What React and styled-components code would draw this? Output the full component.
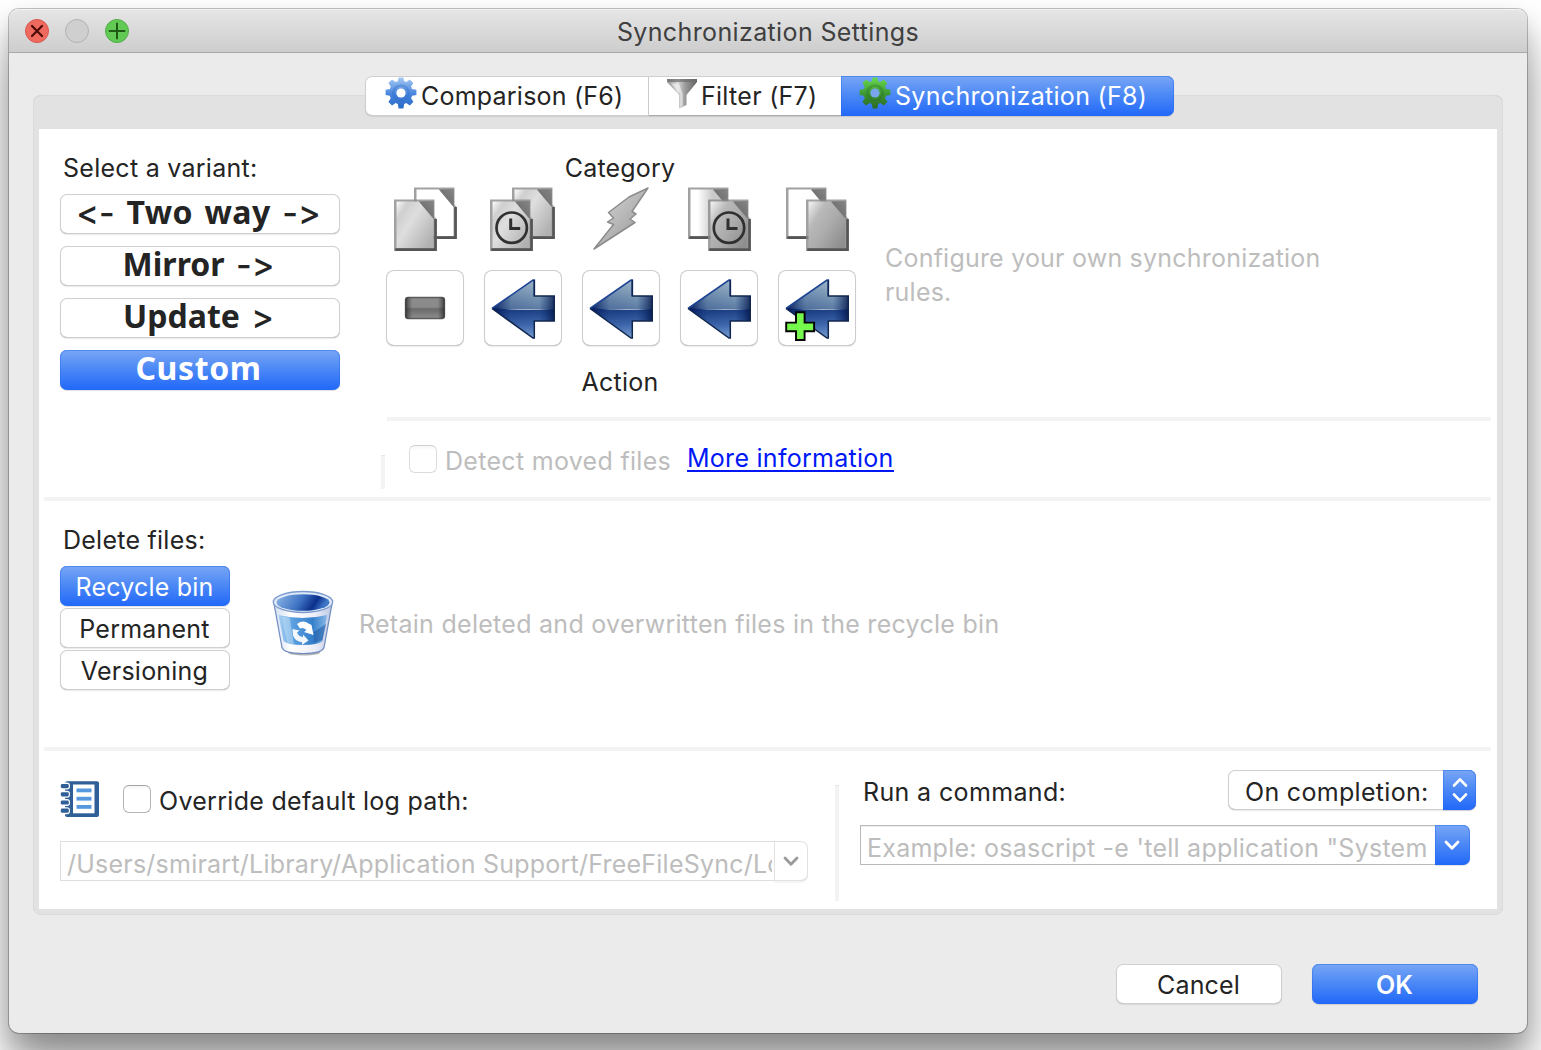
import React from "react";
import styled, { createGlobalStyle, css } from "styled-components";

const GlobalStyle = createGlobalStyle`
  * { box-sizing: border-box; }
  html, body { margin: 0; padding: 0; }
  body {
    background: #ffffff;
    color: #242424;
    font-family: Inter, "Liberation Sans", sans-serif;
    font-size: 25px;
    line-height: 34px;
    overflow: hidden;
  }
  button { font: inherit; color: inherit; margin: 0; }
`;

const blueGradient = css`
  background: linear-gradient(#79a6f5, #4e8af5 45%, #2168f9);
  box-shadow: inset 0 1px 0 #4d89ee, inset 1px 0 0 rgba(40, 105, 240, 0.45),
    inset -1px 0 0 rgba(40, 105, 240, 0.45), 0 1px 1px rgba(0, 0, 0, 0.12);
  color: #ffffff;
`;

const whiteFace = css`
  background: #ffffff;
  box-shadow: inset 0 0 0 1px #cfcfcf, inset 0 -1px 0 #b4b4b4, 0 1px 1px rgba(0, 0, 0, 0.09);
`;

const Desktop = styled.div`
  width: 1541px;
  height: 1050px;
  padding: 9px 14px 17px 9px;
  overflow: hidden;
`;

const Window = styled.main`
  display: flex;
  flex-direction: column;
  width: 1518px;
  height: 1024px;
  border-radius: 10px;
  background: #ebebeb;
  box-shadow: 0 0 0 1px rgba(0, 0, 0, 0.24), 0 14px 26px rgba(0, 0, 0, 0.2),
    0 36px 50px rgba(0, 0, 0, 0.34);
`;

const TitleBar = styled.header`
  display: grid;
  grid-template-columns: 200px 1fr 200px;
  align-items: center;
  height: 44px;
  border-radius: 10px 10px 0 0;
  border-bottom: 1px solid #a9a9a9;
  background: linear-gradient(#e6e6e6, #cdcdcd);
  box-shadow: inset 0 1px 0 #f4f4f4;
`;

const TrafficLights = styled.div`
  display: flex;
  gap: 16px;
  padding-left: 16px;
`;

const Light = styled.span`
  width: 24px;
  height: 24px;
  border-radius: 50%;
  border: 1px solid ${(p) => p.$edge};
  background: ${(p) => p.$fill};
  svg { display: block; }
`;

const Title = styled.h1`
  margin: 2px 0 0;
  font-size: 25px;
  font-weight: 400;
  line-height: 34px;
  letter-spacing: 0.37px;
  text-align: center;
  color: #404040;
`;

const TabBox = styled.section`
  width: 1470px;
  height: 820px;
  margin: 42px 0 0 24px;
  padding: 0 6px;
  border-radius: 8px;
  background: #e2e2e2;
  box-shadow: inset 0 0 0 1px #dbdbdb, inset 0 1px 0 #cfcfcf;
`;

const TabBar = styled.nav`
  display: flex;
  width: 809px;
  height: 40px;
  margin: -19px 0 13px 326px;
`;

const Tab = styled.button`
  display: flex;
  align-items: flex-start;
  gap: ${(p) => p.$gap || 4}px;
  width: ${(p) => p.$width}px;
  height: 40px;
  padding: 0 0 0 ${(p) => p.$inset}px;
  border: 0;
  background: #ffffff;
  box-shadow: inset 0 1px 0 #cfcfcf, inset 0 -1px 0 #ababab, 0 1px 1px rgba(0, 0, 0, 0.1);
  &:first-child { ${whiteFace} }
  ${(p) => p.$active && blueGradient}
  &:first-child { border-radius: 7px 0 0 7px; }
  &:last-child { border-radius: 0 7px 7px 0; }
  svg { flex: none; margin-top: 1px; }
`;

const Text = styled.span`
  display: block;
  line-height: ${(p) => p.$line || 34}px;
  letter-spacing: ${(p) => p.$track || 0}px;
  white-space: nowrap;
  color: ${(p) => (p.$muted ? "#bdbdbd" : "inherit")};
`;

const TabText = styled(Text)`
  line-height: 40px;
`;

const Panel = styled.div`
  width: 1458px;
  height: 780px;
  background: #ffffff;
`;

const Rule = styled.hr`
  height: 4px;
  margin: 0 6px 0 ${(p) => p.$indent}px;
  border: 0;
  background: #f3f3f3;
`;

const VerticalRule = styled.div`
  flex: none;
  width: 4px;
  height: ${(p) => p.$height}px;
  margin-top: 34px;
  background: #f3f3f3;
  border-top: 1px solid #e6e6e6;
`;

const DirectionSection = styled.section`
  display: flex;
  height: 368px;
`;

const ChoiceColumn = styled.div`
  display: flex;
  flex-direction: column;
  flex: none;
  width: ${(p) => p.$width}px;
  margin-left: 21px;
  padding-top: 22px;
`;

const ChoiceLabel = styled(Text)`
  margin: 0 0 9px 3px;
`;

const ChoiceList = styled.div`
  display: flex;
  flex-direction: column;
  gap: ${(p) => p.$gap}px;
`;

const PushButton = styled.button`
  width: ${(p) => p.$width || "100%"};
  height: 40px;
  padding: 0 1px 0 0;
  border: 0;
  border-radius: 7px;
  line-height: 42px;
  letter-spacing: ${(p) => p.$track || 0}px;
  font-weight: ${(p) => (p.$strong ? 600 : 400)};
  white-space: nowrap;
  ${whiteFace}
  ${(p) => p.$active && blueGradient}
`;

const VariantButton = styled(PushButton)`
  padding: 0 3px 5px 0;
  font-family: "Noto Sans", "Open Sans", sans-serif;
  font-size: 32px;
  font-weight: 700;
  line-height: 35px;
  word-spacing: 3px;
`;

const Operator = styled.span`
  position: relative;
  top: 1px;
  font-family: Inter, sans-serif;
  font-size: 34px;
  font-weight: 500;
  font-feature-settings: "calt" 0;
  line-height: 0;
  letter-spacing: 0;
`;

const RulesColumn = styled.div`
  width: 1116px;
  margin-left: 41px;
`;

const RulesTop = styled.div`
  display: flex;
  height: 288px;
  padding: 22px 0 0 5px;
`;

const RuleTable = styled.div`
  display: flex;
  flex-direction: column;
  align-items: center;
  width: 470px;
`;

const RuleCaption = styled(Text)`
  margin-right: 2px;
`;

const CategoryRow = styled.div`
  display: flex;
  gap: 34px;
  margin: 2px 0 19px;
  svg { overflow: visible; filter: blur(0.4px); }
`;

const ActionRow = styled.div`
  display: flex;
  gap: 20px;
  margin-bottom: 19px;
`;

const ActionButton = styled.button`
  display: flex;
  align-items: center;
  justify-content: center;
  width: 78px;
  height: 76px;
  padding: 2px 0 0;
  border: 0;
  border-radius: 8px;
  background: #ffffff;
  box-shadow: inset 0 0 0 1px #cccccc, inset 0 -1px 0 #bcbcbc, 0 1px 1px rgba(0, 0, 0, 0.08);
`;

const Description = styled.div`
  margin: 90px 0 0 29px;
`;

const DetectRow = styled.div`
  display: flex;
`;

const Checkbox = styled.span`
  flex: none;
  width: 28px;
  height: 28px;
  border: 1px solid ${(p) => (p.$muted ? "#dcdcdc" : "#b5b5b5")};
  border-top-color: ${(p) => (p.$muted ? "#cecece" : "#a3a3a3")};
  border-radius: 6px;
  background: linear-gradient(#f5f5f5, #ffffff 4px);
`;

const DetectCheckbox = styled(Checkbox)`
  margin: 24px 8px 0 24px;
`;

const DetectText = styled(Text)`
  width: 242px;
  margin-top: 23px;
`;

const InfoLink = styled.a`
  height: 31px;
  margin-top: 20px;
  line-height: 34px;
  letter-spacing: 0.27px;
  border-bottom: 2px solid #0018f5;
  color: #0018f5;
  white-space: nowrap;
`;

const DeleteSection = styled.section`
  display: flex;
  height: 246px;
`;

const DeleteHint = styled.div`
  display: flex;
  align-items: center;
  gap: 24px;
  height: 66px;
  margin: 89px 0 0 41px;
`;

const HintText = styled(Text)`
  padding-top: 2px;
`;

const BottomSection = styled.section`
  display: flex;
  height: 158px;
`;

const LogColumn = styled.div`
  width: 796px;
  padding: 28px 0 0 21px;
`;

const LogRow = styled.div`
  display: flex;
  align-items: center;
  height: 40px;
  margin-bottom: 22px;
`;

const LogCheckbox = styled(Checkbox)`
  margin: 0 8px 0 23px;
`;

const LogText = styled(Text)`
  padding-top: 4px;
`;

const CommandColumn = styled.div`
  padding: 19px 0 0 21px;
`;

const CommandRow = styled.div`
  display: flex;
  align-items: center;
  justify-content: space-between;
  width: 616px;
  height: 40px;
  margin-bottom: 15px;
  padding-left: 3px;
`;

const CommandText = styled(Text)`
  padding-top: 4px;
`;

const Popup = styled.button`
  display: flex;
  justify-content: space-between;
  width: 248px;
  height: 40px;
  padding: 0 0 0 17px;
  border: 0;
  border-radius: 7px;
  ${whiteFace}
`;

const PopupArrows = styled.span`
  display: flex;
  align-items: center;
  justify-content: center;
  width: 33px;
  height: 40px;
  border-radius: 0 7px 7px 0;
  ${blueGradient}
`;

const Combo = styled.div`
  display: flex;
  height: 40px;
`;

const ComboField = styled.div`
  width: ${(p) => p.$width}px;
  height: 40px;
  padding: 2px 0 0 6px;
  border: 1px solid ${(p) => (p.$muted ? "#dedede" : "#bababa")};
  border-right: 0;
  box-shadow: ${(p) => (p.$muted ? "none" : "inset 0 1px 0 #f0f0f0")};
`;

const ComboClip = styled.div`
  width: ${(p) => p.$width}px;
  overflow: hidden;
`;

const ComboArrow = styled.button`
  display: flex;
  align-items: center;
  justify-content: center;
  width: ${(p) => p.$width}px;
  height: 40px;
  padding: 0 1px 0 0;
  border: 0;
  border-radius: 0 7px 7px 0;
  background: #ffffff;
  box-shadow: inset 0 0 0 1px #e2e2e2, inset 0 -1px 0 #d4d4d4, 0 2px 1px rgba(0, 0, 0, 0.04);
  ${(p) => p.$active && blueGradient}
`;

const Footer = styled.footer`
  display: flex;
  justify-content: flex-end;
  gap: 30px;
  padding: 49px 49px 0 0;
`;

function GearIcon({ id, light, dark, outline, hole }) {
  return (
    <svg width="32" height="32" viewBox="0 0 32 32">
      <defs>
        <linearGradient id={id} x1="0" y1="0" x2="0" y2="1">
          <stop offset="0" stopColor={light} />
          <stop offset="0.55" stopColor={dark} />
          <stop offset="1" stopColor={outline} />
        </linearGradient>
      </defs>
      <path
        d="M12.8 4.2 13.6.6h4.8l.8 3.6 2.1.8 3.4-2.4 3.6 3.500-2.200 3.500.9 2.300 4.400.9v5.100l-4.300.8-1 2.500 2.300 3.500-3.500 3.700-3.700-2.300-2 .9-.8 4.400h-4.800l-.8-4.400-2.200-.9-3.500 2.400-3.700-3.600 2.300-3.700-.9-2.400-4.200-.9v-5.100l4.300-.9.8-2.300-2.300-3.500 3.600-3.500 3.500 2.400z"
        fill={`url(#${id})`}
      />
      <circle cx="16" cy="16" r="7.6" fill="none" stroke={outline} strokeWidth="2.4" opacity="0.35" />
      <circle cx="16" cy="16" r="4.6" fill={hole} />
    </svg>
  );
}

function FunnelIcon() {
  return (
    <svg width="32" height="32" viewBox="0 0 32 32">
      <defs>
        <linearGradient id="funnel">
          <stop offset="0" stopColor="#8e8e8e" />
          <stop offset="0.35" stopColor="#d9d9d9" />
          <stop offset="0.6" stopColor="#9c9c9c" />
          <stop offset="1" stopColor="#606060" />
        </linearGradient>
      </defs>
      <path d="M1 2h30v3L20.5 18v10L13 31.5V18L1 5z" fill="url(#funnel)" />
      <path d="M1 2h30l-1 3H2z" fill="#6c6c6c" opacity="0.7" />
      <path d="M5 6.5 14.3 17v13l2.4-1.2V17L13 6.5z" fill="#fff" opacity="0.5" />
    </svg>
  );
}

function Page({ x, y, fill }) {
  return (
    <g transform={`translate(${x} ${y})`}>
      <path d="M0 .5h40.5v17l2.5 3V52H0z" fill="#8a8a8a" opacity="0.8" />
      <path d="M1.3 50.6h40.2V20" fill="none" stroke="#555555" strokeWidth="2.6" />
      <path d="M2.5 2.5H25l14.5 17.5v29h-37z" fill={fill} />
      <path d="M25 2.5 39.8 20V2z" fill="url(#fold)" />
    </g>
  );
}

function Clock({ x }) {
  return (
    <g fill="none" stroke="#303030">
      <circle cx={x} cy="40.7" r="15.2" strokeWidth="2.7" />
      <path d={`M${x - 1} 31.5v10h9.5`} strokeWidth="3" />
    </g>
  );
}

function PageDefs() {
  return (
    <defs>
      <linearGradient id="fold" x1="1" y1="0" x2="0" y2="1">
        <stop offset="0" stopColor="#858585" />
        <stop offset="0.5" stopColor="#747474" />
        <stop offset="1" stopColor="#b8b8b8" />
      </linearGradient>
      <linearGradient id="sheet" x1="0" y1="0" x2="1" y2="0.8">
        <stop offset="0" stopColor="#fbfbfb" />
        <stop offset="0.2" stopColor="#cfcfcf" />
        <stop offset="0.45" stopColor="#dedede" />
        <stop offset="1" stopColor="#b0b0b0" />
      </linearGradient>
      <linearGradient id="sheetDark" x1="0" y1="0" x2="1" y2="0.8">
        <stop offset="0" stopColor="#f4f4f4" />
        <stop offset="0.3" stopColor="#b9b9b9" />
        <stop offset="0.6" stopColor="#ababab" />
        <stop offset="1" stopColor="#8e8e8e" />
      </linearGradient>
      <linearGradient id="sheetFade">
        <stop offset="0.2" stopColor="#ffffff" />
        <stop offset="0.6" stopColor="#c9c9c9" />
      </linearGradient>
    </defs>
  );
}

function LeftOnlyIcon() {
  return (
    <svg width="64" height="64" viewBox="0 0 64 64">
      <PageDefs />
      <Page x={21} y={0} fill="#ffffff" />
      <Page x={1} y={12} fill="url(#sheet)" />
    </svg>
  );
}

function LeftNewerIcon() {
  return (
    <svg width="64" height="64" viewBox="0 0 64 64">
      <Page x={21} y={0} fill="url(#sheet)" />
      <Page x={-1} y={12} fill="url(#sheet)" />
      <Clock x={20.7} />
    </svg>
  );
}

function ConflictIcon() {
  return (
    <svg width="64" height="64" viewBox="0 0 64 64">
      <defs>
        <linearGradient id="bolt" x1="0" y1="0" x2="1" y2="1">
          <stop offset="0.3" stopColor="#c6c6c6" />
          <stop offset="0.7" stopColor="#a8a8a8" />
        </linearGradient>
      </defs>
      <path
        d="M59 1 43 24.5l4 2.5-6 5 5 3.5L5 62l19.500-24.500-6-2.500 6-4-5-5.500L40 10z"
        fill="url(#bolt)"
        stroke="#8c8c8c"
        strokeWidth="1.5"
        strokeLinejoin="round"
      />
    </svg>
  );
}

function RightNewerIcon() {
  return (
    <svg width="64" height="64" viewBox="0 0 64 64">
      <Page x={1} y={0} fill="url(#sheetFade)" />
      <Page x={21} y={12} fill="url(#sheetDark)" />
      <Clock x={42} />
    </svg>
  );
}

function RightOnlyIcon() {
  return (
    <svg width="64" height="64" viewBox="0 0 64 64">
      <Page x={1} y={0} fill="#ffffff" />
      <Page x={21} y={12} fill="url(#sheetDark)" />
    </svg>
  );
}

function MinusIcon() {
  return (
    <svg width="64" height="64" viewBox="0 0 64 64">
      <defs>
        <linearGradient id="minus" x1="0" y1="0" x2="0" y2="1">
          <stop offset="0" stopColor="#8b8b8b" />
          <stop offset="0.45" stopColor="#8a8a8a" />
          <stop offset="0.55" stopColor="#6a6a6a" />
          <stop offset="1" stopColor="#8e8e8e" />
        </linearGradient>
        <linearGradient id="minusEdge">
          <stop offset="0" stopColor="#222" stopOpacity="0.75" />
          <stop offset="0.18" stopColor="#444" stopOpacity="0" />
          <stop offset="0.82" stopColor="#444" stopOpacity="0" />
          <stop offset="1" stopColor="#222" stopOpacity="0.75" />
        </linearGradient>
      </defs>
      <rect x="12.5" y="20.5" width="39" height="21" rx="2.5" fill="url(#minus)" stroke="#5c5c5c" strokeWidth="1.3" />
      <rect x="12.5" y="20.5" width="39" height="21" rx="2.5" fill="url(#minusEdge)" />
    </svg>
  );
}

function ArrowLeftIcon({ id, plus }) {
  return (
    <svg width="64" height="64" viewBox="0 0 64 64">
      <defs>
        <linearGradient id={`${id}Top`} x1="0" y1="0" x2="0" y2="1">
          <stop offset="0" stopColor="#a9c0cf" />
          <stop offset="1" stopColor="#5a7ba3" />
        </linearGradient>
        <linearGradient id={`${id}Bottom`} x1="0" y1="0" x2="0" y2="1">
          <stop offset="0" stopColor="#183a7e" />
          <stop offset="0.5" stopColor="#4069ae" />
          <stop offset="1" stopColor="#86aede" />
        </linearGradient>
        <linearGradient id={`${id}Edge`}>
          <stop offset="0" stopColor="#001050" stopOpacity="0.95" />
          <stop offset="0.32" stopColor="#0a2a70" stopOpacity="0.15" />
          <stop offset="0.75" stopColor="#0a2a70" stopOpacity="0" />
          <stop offset="1" stopColor="#001040" stopOpacity="0.8" />
        </linearGradient>
        <clipPath id={`${id}Clip`}>
          <path d="M1 31.5 42 3h1.3V19H63.500v25H43.300V61H42z" />
        </clipPath>
      </defs>
      <g clipPath={`url(#${id}Clip)`}>
        <rect width="64" height="32.5" fill={`url(#${id}Top)`} />
        <path d="M0 31Q32 34.500 64 32V64H0z" fill={`url(#${id}Bottom)`} />
        <rect width="64" height="64" fill={`url(#${id}Edge)`} />
      </g>
      <path d="M1 31.5 42 3h1.3V19" fill="none" stroke="#1d4494" strokeWidth="1.6" />
      <path d="M43.3 3V19H63.300v25H43.300V61H42L1 31.500" fill="none" stroke="#10264f" strokeWidth="1.5" />
      {plus && (
        <path
          d="M11 35.3h8.600v10.300h9.500v8.600h-9.500V63H11v-8.800H1.200v-8.600H11z"
          fill="#75f94c"
          stroke="#000"
          strokeWidth="1.9"
        />
      )}
    </svg>
  );
}

function RecycleBinIcon() {
  return (
    <svg width="64" height="66" viewBox="0 0 64 66">
      <defs>
        <linearGradient id="binBody">
          <stop offset="0" stopColor="#a9d0f2" />
          <stop offset="0.3" stopColor="#5a9fe0" />
          <stop offset="0.7" stopColor="#357fcb" />
          <stop offset="1" stopColor="#86b7e6" />
        </linearGradient>
        <linearGradient id="binMouth" x1="0" y1="0" x2="1" y2="0.2">
          <stop offset="0" stopColor="#8fb7e6" />
          <stop offset="0.5" stopColor="#3f74c4" />
          <stop offset="0.8" stopColor="#0b2f8c" />
          <stop offset="1" stopColor="#3f78c8" />
        </linearGradient>
        <linearGradient id="binShell">
          <stop offset="0" stopColor="#cfdcf2" />
          <stop offset="0.3" stopColor="#ffffff" />
          <stop offset="0.7" stopColor="#eeeef8" />
          <stop offset="1" stopColor="#b9c6e2" />
        </linearGradient>
      </defs>
      <ellipse cx="33" cy="62.5" rx="16" ry="3" fill="#8e8e8e" opacity="0.7" />
      <path d="M2.5 11 11 57.500q2 6 21 6t21-6L61.500 11z" fill="url(#binShell)" stroke="#6f8cc0" strokeWidth="1.2" />
      <path d="M7.5 25q24 6 48.500 0L51.500 51q-4 4-19.500 4t-19.500-4z" fill="url(#binBody)" />
      <path d="M11 26.500 16 53l7 1.500-4.500-27z" fill="#c6e1f8" opacity="0.5" />
      <path d="m43 42 12-8-3.500 16-9 3z" fill="#15519e" opacity="0.5" />
      <ellipse cx="32" cy="12" rx="29.7" ry="10.5" fill="#dfeaf8" stroke="#7b9bce" strokeWidth="1.3" />
      <ellipse cx="32" cy="12.5" rx="26.5" ry="8.3" fill="url(#binMouth)" />
      <path d="M26 34q6-4.500 11.500-.5L40.500 35l2 10-9.500-3 2.500-2q-3.500-3-6.500-1.500z" fill="#fff" />
      <path d="M21.500 39l7 1.500-2.500 2q1.500 4 6 4.500v-2.500l5.500 6-6.500 4.500v-2.800q-7-.7-9-6.700z" fill="#fff" opacity="0.92" />
    </svg>
  );
}

function LogIcon() {
  return (
    <svg width="40" height="40" viewBox="0 0 40 40">
      <rect x="5" y="2.2" width="34" height="35.8" rx="2" fill="#2e5f97" />
      <rect x="13" y="5.5" width="21.5" height="28.8" fill="#fff" />
      <g fill="#5699df">
        <rect x="16.5" y="9.500" width="15" height="3.8" />
        <rect x="16.5" y="17.800" width="15" height="3.8" />
        <rect x="16.5" y="26" width="15" height="3.8" />
      </g>
      {[4.5, 12.7, 20.9, 29.1].map((y) => (
        <g key={y}>
          <rect x="0" y={y - 0.9} width="10" height="7" rx="3" fill="#fff" />
          <rect x="0.8" y={y + 0.5} width="8" height="4.2" rx="1.4" fill="#2e5f97" />
        </g>
      ))}
    </svg>
  );
}

function Chevron({ color }) {
  return (
    <svg width="18" height="12" viewBox="0 0 18 12" fill="none" stroke={color} strokeWidth="2.8" strokeLinecap="round" strokeLinejoin="round">
      <path d="m3 3 6 6.200L15 3" />
    </svg>
  );
}

function UpDownChevrons() {
  return (
    <svg width="18" height="28" viewBox="0 0 18 28" fill="none" stroke="#fff" strokeWidth="2.6" strokeLinecap="round" strokeLinejoin="round">
      <path d="m3 9.5 6-6.200 6 6.200M3 18.500l6 6.200 6-6.200" />
    </svg>
  );
}

export default function App() {
  return (
    <Desktop>
      <GlobalStyle />
      <Window>
        <TitleBar>
          <TrafficLights>
            <Light $fill="#ee6a5f" $edge="#d9574c">
              <svg width="22" height="22" viewBox="0 0 22 22">
                <path d="m6 6 10 10M16 6 6 16" stroke="#4d0b06" strokeWidth="2.2" strokeLinecap="round" />
              </svg>
            </Light>
            <Light $fill="#cfcfcf" $edge="#b2b2b2" />
            <Light $fill="#62c955" $edge="#4fae43">
              <svg width="22" height="22" viewBox="0 0 22 22">
                <path d="M3.5 11h15M11 3.500v15" stroke="#1f5a14" strokeWidth="2" strokeLinecap="round" />
              </svg>
            </Light>
          </TrafficLights>
          <Title>Synchronization Settings</Title>
        </TitleBar>

        <TabBox>
          <TabBar>
            <Tab $width={284} $inset={20}>
              <GearIcon id="gearBlue" light="#a5c8f4" dark="#4784dc" outline="#2a6bc9" hole="#ffffff" />
              <TabText $track={0.22}>Comparison (F6)</TabText>
            </Tab>
            <Tab $width={192} $inset={17} $gap={3}>
              <FunnelIcon />
              <TabText $track={0.28}>Filter (F7)</TabText>
            </Tab>
            <Tab $width={333} $inset={18} $active>
              <GearIcon id="gearGreen" light="#69db50" dark="#3b9431" outline="#2c6a26" hole="#78a5ee" />
              <TabText $track={0.31}>Synchronization (F8)</TabText>
            </Tab>
          </TabBar>

          <Panel>
            <DirectionSection>
              <ChoiceColumn $width={280}>
                <ChoiceLabel $track={0.27}>Select a variant:</ChoiceLabel>
                <ChoiceList $gap={12}>
                  <VariantButton $track={0.4}>
                    <Operator>&lt;-</Operator> Two way <Operator>-&gt;</Operator>
                  </VariantButton>
                  <VariantButton>
                    Mirror <Operator>-&gt;</Operator>
                  </VariantButton>
                  <VariantButton>
                    Update <Operator>&gt;</Operator>
                  </VariantButton>
                  <VariantButton $track={0.6} $active>Custom</VariantButton>
                </ChoiceList>
              </ChoiceColumn>

              <RulesColumn>
                <RulesTop>
                  <RuleTable>
                    <RuleCaption $track={0.2}>Category</RuleCaption>
                    <CategoryRow>
                      <LeftOnlyIcon />
                      <LeftNewerIcon />
                      <ConflictIcon />
                      <RightNewerIcon />
                      <RightOnlyIcon />
                    </CategoryRow>
                    <ActionRow>
                      <ActionButton><MinusIcon /></ActionButton>
                      <ActionButton><ArrowLeftIcon id="a1" /></ActionButton>
                      <ActionButton><ArrowLeftIcon id="a2" /></ActionButton>
                      <ActionButton><ArrowLeftIcon id="a3" /></ActionButton>
                      <ActionButton><ArrowLeftIcon id="a4" plus /></ActionButton>
                    </ActionRow>
                    <RuleCaption $track={0.25}>Action</RuleCaption>
                  </RuleTable>
                  <Description>
                    <Text $muted $track={0.21}>Configure your own synchronization</Text>
                    <Text $muted $track={0.21}>rules.</Text>
                  </Description>
                </RulesTop>
                <Rule $indent={6} />
                <DetectRow>
                  <VerticalRule $height={34} />
                  <DetectCheckbox $muted />
                  <DetectText $muted $track={0.3}>Detect moved files</DetectText>
                  <InfoLink>More information</InfoLink>
                </DetectRow>
              </RulesColumn>
            </DirectionSection>
            <Rule $indent={5} />

            <DeleteSection>
              <ChoiceColumn $width={170}>
                <ChoiceLabel $track={0.25}>Delete files:</ChoiceLabel>
                <ChoiceList $gap={2}>
                  <PushButton $track={0.2} $active>Recycle bin</PushButton>
                  <PushButton $track={0.22}>Permanent</PushButton>
                  <PushButton $track={0.22}>Versioning</PushButton>
                </ChoiceList>
              </ChoiceColumn>
              <DeleteHint>
                <RecycleBinIcon />
                <HintText $muted $track={0.28}>Retain deleted and overwritten files in the recycle bin</HintText>
              </DeleteHint>
            </DeleteSection>
            <Rule $indent={5} />

            <BottomSection>
              <LogColumn>
                <LogRow>
                  <LogIcon />
                  <LogCheckbox />
                  <LogText $track={0.29}>Override default log path:</LogText>
                </LogRow>
                <Combo>
                  <ComboField $width={714} $muted>
                    <ComboClip $width={705}>
                      <Text $muted $line={40} $track={0.23}>/Users/smirart/Library/Application Support/FreeFileSync/Logs</Text>
                    </ComboClip>
                  </ComboField>
                  <ComboArrow $width={34}><Chevron color="#9a9a9a" /></ComboArrow>
                </Combo>
              </LogColumn>
              <VerticalRule $height={116} />
              <CommandColumn>
                <CommandRow>
                  <CommandText $track={0.36}>Run a command:</CommandText>
                  <Popup>
                    <Text $line={44} $track={0.31}>On completion:</Text>
                    <PopupArrows><UpDownChevrons /></PopupArrows>
                  </Popup>
                </CommandRow>
                <Combo>
                  <ComboField $width={575}>
                    <ComboClip $width={566}>
                      <Text $muted $line={40} $track={0.25}>Example: osascript -e 'tell application "System</Text>
                    </ComboClip>
                  </ComboField>
                  <ComboArrow $width={35} $active><Chevron color="#ffffff" /></ComboArrow>
                </Combo>
              </CommandColumn>
            </BottomSection>
          </Panel>
        </TabBox>

        <Footer>
          <PushButton $width="166px" $track={0.15}>Cancel</PushButton>
          <PushButton $width="166px" $active $strong>OK</PushButton>
        </Footer>
      </Window>
    </Desktop>
  );
}
